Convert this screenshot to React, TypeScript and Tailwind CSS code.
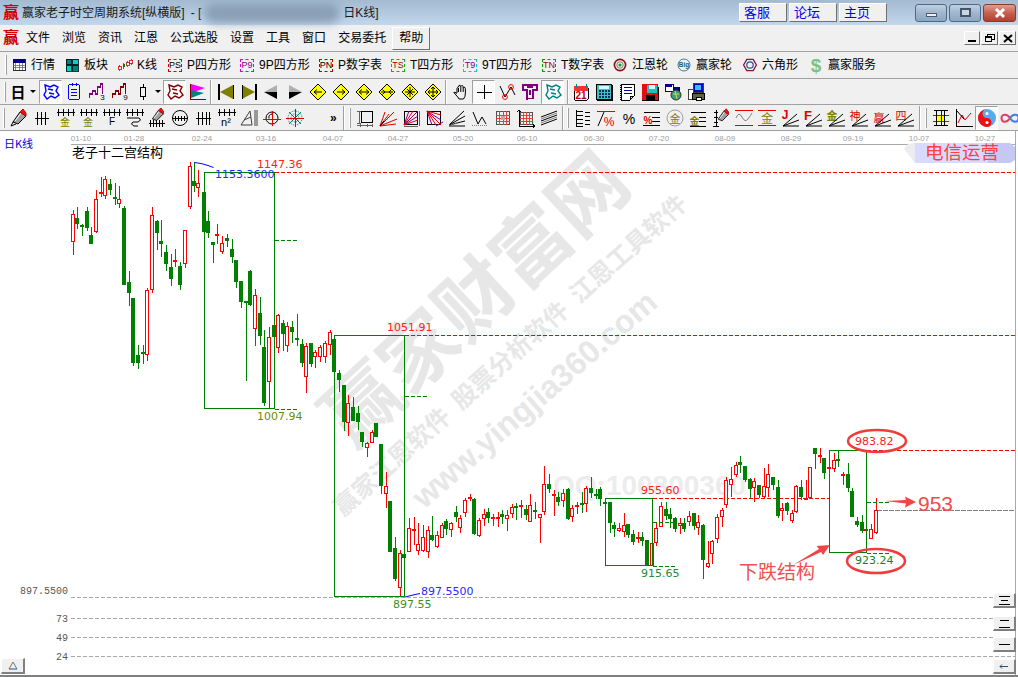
import React from "react";

const F = "'Liberation Sans','Noto Sans CJK SC',sans-serif";
const D = "'DejaVu Sans','Liberation Sans',sans-serif";
const CJK = "'Noto Sans CJK SC','Liberation Sans',sans-serif";

type C = [number, number, number, number, number, string];

const z3: C[] = [
  [219,240,253,337,374,"r"],[233,232,265,281,296,"g"],[247,283,285,288,317,"g"],[261,232,243,293,302,"g"],[275,291,315,341,341,"g"],
  [289,180,208,305,308,"r"],[303,140,186,190,200,"r"],[317,138,148,197,207,"r"],[331,147,163,179,195,"g"],[345,160,202,206,224,"g"],
  [359,168,208,221,233,"r"],[372,228,235,464,464,"g"],[387,423,456,488,527,"g"],[401,504,504,698,707,"g"],[415,645,675,698,716,"g"],
  [429,645,665,668,702,"g"],[443,474,481,674,692,"r"],[456,231,256,479,488,"r"],[471,270,273,308,360,"g"],[485,270,334,342,380,"g"],
  [499,345,366,401,424,"g"],[513,372,411,446,467,"g"],[527,357,391,395,412,"r"],[540,395,408,464,480,"g"],[555,300,301,401,414,"r"],
  [570,97,109,230,236,"r"],[582,97,153,167,187,"g"],[596,120,160,173,201,"r"],[612,185,186,305,305,"g"],[624,243,273,308,323,"g"],
  [640,335,336,344,399,"g"],[653,282,313,316,342,"r"],[666,318,340,365,372,"r"],[681,312,324,332,351,"g"],[696,326,357,381,398,"g"],
  [708,390,390,456,474,"g"],[723,453,453,515,534,"g"],[738,512,514,518,752,"g"],[750,421,423,525,527,"g"],[765,477,496,598,647,"r"],
  [780,501,549,617,645,"g"],[792,600,652,818,828,"g"],[807,590,622,755,834,"r"],[822,560,585,621,650,"g"],[834,553,556,655,670,"r"],
  [849,570,579,611,662,"g"],[863,575,589,647,665,"r"],[876,573,591,605,640,"g"],[891,552,625,629,647,"g"],[906,628,642,698,710,"g"],
  [918,640,649,742,790,"r"],[933,639,640,702,710,"g"],[947,660,667,682,713,"r"],[960,645,652,682,695,"r"],[975,632,640,680,700,"r"],
  [990,600,607,646,675,"r"],
];
const z4: C[] = [
  [12,50,57,155,175,"g"],[27,150,160,180,215,"g"],[42,195,195,305,332,"g"],[54,225,250,310,347,"r"],[69,230,262,302,304,"g"],[84,258,279,305,330,"g"],
  [96,335,335,365,380,"g"],[111,365,370,385,410,"r"],[126,330,337,368,370,"r"],[138,310,310,350,352,"g"],[153,372,372,497,522,"g"],
  [168,455,497,523,563,"r"],[180,543,543,697,697,"g"],[195,650,685,777,783,"g"],[210,690,700,805,830,"r"],[222,690,703,715,765,"g"],
  [237,595,625,695,697,"r"],[252,590,628,631,675,"r"],[264,610,672,692,705,"r"],[279,615,652,692,695,"r"],[294,617,631,695,713,"r"],
  [306,588,645,660,663,"g"],[321,633,646,680,683,"r"],[336,610,616,653,655,"r"],[348,598,604,627,645,"g"],[363,605,609,630,650,"r"],
  [378,558,576,591,606,"g"],[390,585,595,625,640,"r"],[405,535,539,580,590,"r"],[420,521,530,533,542,"r"],[432,535,537,642,645,"g"],
  [447,593,601,648,650,"r"],[462,567,583,596,617,"r"],[474,565,576,593,610,"g"],[489,582,592,598,617,"r"],[504,575,590,593,622,"r"],
  [516,570,583,590,612,"g"],[531,570,584,598,632,"r"],[546,552,562,581,595,"r"],[558,548,558,561,600,"g"],[573,540,556,562,595,"r"],
  [588,555,568,584,600,"g"],[600,523,556,605,607,"r"],[615,545,570,572,598,"g"],[630,583,583,595,670,"r"],[642,438,492,575,585,"r"],
  [657,462,492,506,520,"g"],[672,510,522,525,587,"r"],[684,515,531,545,558,"g"],[699,508,520,542,560,"r"],[714,503,507,597,600,"g"],
  [726,555,565,590,605,"r"],[741,545,555,557,582,"r"],[756,515,549,553,580,"g"],[768,497,505,553,575,"r"],[783,470,505,520,535,"g"],
  [798,508,523,526,537,"g"],[810,502,507,536,557,"g"],[825,535,547,550,555,"g"],[840,547,547,608,640,"g"],[852,605,615,627,650,"g"],
  [867,610,625,633,635,"r"],[882,578,616,635,650,"r"],[894,612,612,645,655,"g"],[909,630,643,666,675,"g"],[924,635,650,653,668,"r"],
  [936,637,651,663,678,"g"],[951,660,660,737,737,"g"],[966,655,670,737,737,"r"],[978,610,625,668,677,"r"],[993,545,557,620,622,"r"],
];
const z5: C[] = [
  [18,245,268,288,300,"g"],[32,265,283,297,325,"g"],[45,290,295,327,335,"g"],[60,295,308,318,342,"r"],[72,295,310,327,335,"g"],
  [87,273,289,305,318,"r"],[102,280,280,318,330,"g"],[114,285,307,325,345,"r"],[129,313,315,420,476,"g"],[144,362,428,442,445,"r"],
  [156,360,362,403,432,"r"],[171,282,292,356,368,"r"],[186,265,270,292,320,"r"],[198,170,181,254,263,"r"],[213,140,178,196,230,"r"],
  [228,125,136,165,170,"r"],[240,108,127,134,160,"g"],[255,138,138,180,187,"g"],[270,175,178,206,235,"g"],[282,175,183,203,245,"r"],
  [297,195,195,225,235,"g"],[312,145,197,230,233,"r"],[324,132,163,203,230,"r"],[339,172,172,195,210,"g"],[354,180,202,287,295,"g"],
  [366,250,265,274,303,"r"],[381,245,250,272,285,"g"],[396,270,278,302,310,"r"],[408,195,199,277,280,"r"],[423,180,202,231,240,"g"],
  [438,180,234,237,240,"r"],[450,140,142,233,237,"r"],[465,85,85,101,148,"g"],[480,85,105,108,130,"r"],[492,113,115,158,178,"g"],
  [507,142,142,145,172,"r"],[522,100,121,146,155,"r"],[534,90,118,122,140,"g"],[549,155,163,165,195,"r"],[564,128,162,203,215,"g"],
  [576,205,213,290,292,"g"],[591,290,303,314,320,"g"],[606,285,305,332,340,"g"],[618,322,328,333,390,"r"],[633,312,328,356,358,"r"],
  [648,235,270,338,342,"r"],
];

function Candle({ c, ox, oy }: { c: C; ox: number; oy: number }) {
  const px = Math.floor(ox + c[0] / 3);
  const wt = Math.round(oy + c[1] / 3);
  const bt = Math.round(oy + c[2] / 3);
  const bb = Math.round(oy + c[3] / 3);
  const wb = Math.round(oy + c[4] / 3);
  const red = c[5] === "r";
  const col = red ? "#ff0000" : "#008000";
  const h = bb - bt;
  return (
    <g>
      <rect x={px} y={wt} width={1} height={wb - wt} fill={col} />
      {h <= 2 || !red ? (
        <rect x={px - 2} y={bt} width={4} height={Math.max(h, 2)} fill={col} />
      ) : (
        <rect x={px - 1.5} y={bt + 0.5} width={3} height={h - 1} fill="#fff" stroke={col} strokeWidth={1} />
      )}
    </g>
  );
}

function Label({ x, y, c, t, a }: { x: number; y: number; c: string; t: string; a?: "end" | "start" | "middle" }) {
  return (
    <text x={x} y={y} fill={c} fontFamily={D} fontSize={11} textAnchor={a ?? "start"}>
      {t}
    </text>
  );
}

const dates: [string, number][] = [
  ["01-10", 81],["01-28", 134],["02-24", 202],["03-16", 266],["04-07", 333],["04-27", 398],["05-20", 463],["06-10", 527],
  ["06-30", 594],["07-20", 659],["08-09", 725],["08-29", 791],["09-19", 853],["10-07", 919],["10-27", 985],
];

function Chart() {
  const G = "#008000";
  return (
    <svg className="absolute inset-0 block" width={1018} height={544} viewBox="0 131 1018 544">
      {/* watermark */}
      <g fill="#e7e7e7" fontFamily={CJK} fontWeight={700}>
        <text x={476} y={326} fontSize={77} textAnchor="middle" transform="rotate(-43 476 300)">赢家财富网</text>
        <text x={510} y={364} fontSize={24.5} textAnchor="middle" transform="rotate(-42 510 355)">
          赢家江恩软件<tspan dx={12}>股票分析软件</tspan><tspan dx={12}>江恩工具软件</tspan>
        </text>
      </g>
      <g fill="#e7e7e7" fontFamily="'Liberation Sans',sans-serif" fontWeight={700}>
        <text x={535} y={410} fontSize={32} textAnchor="middle" transform="rotate(-41 535 400)">www.yingjia360.com</text>
        <text x={553} y={495} fontSize={28} fill="#ececec">QQ:100800360</text>
      </g>

      {/* axes */}
      <rect x={71} y={144} width={945} height={1} fill="#a8a8a8" />
      <rect x={1015} y={131} width={1} height={544} fill="#a8a8a8" />
      {dates.map(([t, x]) => (
        <text key={t} x={x} y={141} fill="#a0a0a0" fontFamily={F} fontSize={8} textAnchor="middle">{t}</text>
      ))}

      <text x={4} y={148} fill="#0000e0" fontFamily={CJK} fontSize={11}>日K线</text>
      <text x={72} y={157} fill="#000" fontFamily={CJK} fontSize={13}>老子十二宫结构</text>

      {/* top-right banner */}
      <path d="M904 149 L908 144 L915 143 V163 H915 L904 149Z" fill="#ececf2" />
      <rect x={915} y={143} width={73} height={20} fill="#d8daff" />
      <path d="M988 143 H1010 L1015 147 V160 L1010 163 H988Z" fill="#c5c8f5" />
      <text x={925} y={159} fill="#ff4040" fontFamily={CJK} fontSize={18.5}>电信运营</text>

      {/* grey dashed */}
      <g stroke="#a8a8a8" strokeDasharray="4 2" shapeRendering="crispEdges">
        <line x1={71} x2={1015} y1={597.5} y2={597.5} />
        <line x1={71} x2={1015} y1={618.5} y2={618.5} />
        <line x1={71} x2={1015} y1={637.5} y2={637.5} />
        <line x1={71} x2={1015} y1={656.5} y2={656.5} />
      </g>
      <line x1={877} x2={1015} y1={510.5} y2={510.5} stroke="#808080" strokeDasharray="5 1" shapeRendering="crispEdges" />

      {/* red dashed */}
      <g stroke="#ff0000" strokeDasharray="4 2" shapeRendering="crispEdges">
        <line x1={275} x2={1015} y1={172.5} y2={172.5} />
        <line x1={405} x2={1015} y1={335.5} y2={335.5} />
        <line x1={653} x2={829} y1={498.5} y2={498.5} />
        <line x1={867} x2={1015} y1={450.5} y2={450.5} />
      </g>

      {/* candles */}
      {z3.map((c, i) => <Candle key={"a" + i} c={c} ox={0} oy={130} />)}
      {z4.map((c, i) => <Candle key={"b" + i} c={c} ox={330} oy={320} />)}
      {z5.map((c, i) => <Candle key={"c" + i} c={c} ox={660} oy={420} />)}

      {/* boxes */}
      <g stroke={G} fill="none" shapeRendering="crispEdges">
        <rect x={204.5} y={172.5} width={70} height={236} />
        <rect x={334.5} y={335.5} width={70} height={261} />
        <rect x={605.5} y={498.5} width={47} height={67} />
        <rect x={829.5} y={450.5} width={37} height={102} />
        <g strokeDasharray="4 2">
          <line x1={275} x2={297} y1={240.5} y2={240.5} />
          <line x1={275} x2={297} y1={409.5} y2={409.5} />
          <line x1={405} x2={427} y1={396.5} y2={396.5} />
          <line x1={653} x2={675} y1={522.5} y2={522.5} />
          <line x1={653} x2={675} y1={566.5} y2={566.5} />
          <line x1={867} x2={889} y1={502.5} y2={502.5} />
          <line x1={867} x2={889} y1={553.5} y2={553.5} />
        </g>
      </g>

      {/* blue leader lines */}
      <path d="M194.5 162.5 L201 163.5 L208 165.5 L213.5 167.5" stroke="#0000ff" fill="none" />
      <path d="M405 597 L413 595 L420 593.5" stroke="#0000ff" fill="none" />

      {/* price labels */}
      <Label x={257} y={168} c="#ff2020" t="1147.36" />
      <Label x={215} y={178} c="#2828ff" t="1153.3600" />
      <Label x={257} y={420} c="#6f8b00" t="1007.94" />
      <Label x={387} y={331} c="#ff2020" t="1051.91" />
      <Label x={421} y={595} c="#2828ff" t="897.5500" />
      <Label x={393} y={608} c="#3d8f1a" t="897.55" />
      <Label x={641} y={494} c="#ff2020" t="955.60" />
      <Label x={641} y={577} c="#268a3c" t="915.65" />
      <Label x={855} y={445} c="#ff2020" t="983.82" />
      <Label x={855} y={564} c="#1a8030" t="923.24" />

      {/* axis numbers */}
      <g fill="#555" fontFamily="'Liberation Mono',monospace" fontSize={10} textAnchor="end">
        <text x={68} y={594}>897.5500</text>
        <text x={68} y={622}>73</text>
        <text x={68} y={641}>49</text>
        <text x={68} y={660}>24</text>
      </g>

      {/* annotations */}
      <g fill="none" stroke="#f23c3c" strokeWidth={2.5}>
        <ellipse cx={877} cy={441} rx={29} ry={11} />
        <ellipse cx={876} cy={561} rx={29} ry={12} />
      </g>
      <path d="M885 501 L906 500 L905 496.5 L916 502 L905 507.5 L906 503.5Z" fill="#f04545" />
      <text x={918} y={511} fill="#f24a4a" fontFamily="'Liberation Sans',sans-serif" fontSize={21}>953</text>
      <path d="M793 565 L819 549 L816.5 546 L830 545 L823 555 L821 552Z" fill="#f04545" />
      <text x={739} y={579} fill="#f25050" fontFamily={CJK} fontSize={19}>下跌结构</text>
    </svg>
  );
}

/* ---------- Icons ---------- */
const I = ({ children }: { children: React.ReactNode }) => (
  <svg width={20} height={20} viewBox="0 0 20 20" fill="none" stroke="#000" shapeRendering="crispEdges" className="block">
    {children}
  </svg>
);
const Tx = ({ x, y, s, c, t, w }: { x: number; y: number; s: number; c: string; t: string; w?: number }) => (
  <text x={x} y={y} fontSize={s} fill={c} stroke="none" fontFamily={F} fontWeight={w ?? 400} textAnchor="middle" shapeRendering="auto">{t}</text>
);
const Comb = ({ n, y = 4, x0 = 2, dx = 5 }: { n: number; y?: number; x0?: number; dx?: number }) => (
  <g>
    <path d={`M${x0 - 1} ${y + 0.5}H${x0 + (n - 1) * dx + 3}`} />
    {Array.from({ length: n }).map((_, i) => (
      <path key={i} d={`M${x0 + i * dx + 0.5} ${y - 3}V${y + 4}`} />
    ))}
  </g>
);
const Ang = () => <path d="M3 18H19M3 18L19 12M3 18L17 6" shapeRendering="auto" />;
const Dia = ({ children }: { children: React.ReactNode }) => (
  <I>
    <path d="M10 2L18 10L10 18L2 10Z" fill="#ffff00" stroke="#000" shapeRendering="auto" />
    {children}
  </I>
);
const Stairs = ({ c, t }: { c: string; t: string }) => (
  <I>
    <path d="M2.5 16V12H5.5V9H8.5V12H10.5V5H13.5V2H15.5V12" stroke={c} strokeWidth={1.4} />
    <Tx x={15.5} y={18} s={8} c="#000" t={t} />
  </I>
);
const Wob = ({ c }: { c: string }) => (
  <I>
    <path d="M4 3L9 5L13 3L17 5L15 9L18 13L14 16L10 14L6 17L3 13L5 9ZM7 7L12 8M8 11L13 12" stroke={c} strokeWidth={1.4} shapeRendering="auto" />
  </I>
);

const row2a: React.ReactNode[] = [
  <Wob c="#0000ff" />,
  <I><rect x={4.5} y={2.5} width={11} height={15} rx={2} stroke="#0000ff" /><path d="M7 7H13M7 10H13M7 13H13M8 1V4M12 1V4" stroke="#0000ff" /></I>,
  <Stairs c="#800080" t="3" />,
  <Stairs c="#800000" t="9" />,
  <I><rect x={7.5} y={5.5} width={5} height={9} /><path d="M10.5 2V5M10.5 15V18" /></I>,
];
const row2b: React.ReactNode[] = [
  <Wob c="#800000" />,
  <I>
    <path d="M3 2V11L17 6Z" fill="#ff00ff" stroke="none" shapeRendering="auto" />
    <path d="M3 8V16L16 11Z" fill="#008080" stroke="none" shapeRendering="auto" />
    <path d="M2 2V17H18" stroke="#800000" />
  </I>,
];
const Tri = ({ d, f1, f2 }: { d: string; f1: string; f2?: string }) => (
  <path d={d} fill={f1} stroke={f2 ?? "none"} shapeRendering="auto" />
);
const row2c: React.ReactNode[] = [
  <I><rect x={2} y={2} width={2} height={16} fill="#000" stroke="none" /><Tri d="M4 10L17 3V17Z" f1="#808000" /><path d="M17 3V17" /></I>,
  <I><rect x={16} y={2} width={2} height={16} fill="#000" stroke="none" /><Tri d="M16 10L3 3V17Z" f1="#808000" /><path d="M3 3V17" /></I>,
  <I><Tri d="M2 10L15 3V10Z" f1="#b0b0b0" /><Tri d="M2 10L15 17V10Z" f1="#000" /></I>,
  <I><Tri d="M17 10L4 3V10Z" f1="#b0b0b0" /><Tri d="M17 10L4 17V10Z" f1="#000" /></I>,
  <Dia><path d="M6 10H14M6 10L9 7.5M6 10L9 12.5" shapeRendering="auto" /></Dia>,
  <Dia><path d="M6 10H14M14 10L11 7.5M14 10L11 12.5" shapeRendering="auto" /></Dia>,
  <Dia><path d="M5 10H15M5 10L8 7.5M5 10L8 12.5M15 10L12 7.5M15 10L12 12.5" shapeRendering="auto" /></Dia>,
  <Dia><path d="M4 10H16M8 10L5.5 7.5M8 10L5.5 12.5M12 10L14.5 7.5M12 10L14.5 12.5" shapeRendering="auto" /></Dia>,
  <Dia><path d="M10 5V15M5 10H15M7 7L13 13M13 7L7 13" shapeRendering="auto" /></Dia>,
  <Dia><path d="M10 5V15M5 10H15M10 5L8 7M10 5L12 7M10 15L8 13M10 15L12 13M5 10L7 8M5 10L7 12M15 10L13 8M15 10L13 12" shapeRendering="auto" /></Dia>,
];
const row2d: React.ReactNode[] = [
  <I><path d="M6 11V6M6 6Q6.7 4.5 7.5 6V10M7.5 5Q7.5 3 9 3.2Q9.8 3.5 9.8 5V10M9.8 4.5Q10.5 3 11.7 3.7Q12.2 4.2 12.2 6V10M12.2 6Q13 4.6 14 5.5Q14.4 6 14.4 8V11Q14.4 15 12.5 17H8Q7 15 5 13L2.8 10.5Q3.6 9.5 6 11.5" shapeRendering="auto" /></I>,
  <I><path d="M10.5 3V17M3 10.5H18" /></I>,
  <I>
    <path d="M3 4L8 15L14 5L18 13" shapeRendering="auto" />
    <circle cx={14} cy={5} r={2.4} stroke="#ff0000" shapeRendering="auto" />
    <circle cx={8} cy={15} r={2.4} stroke="#ff0000" shapeRendering="auto" />
  </I>,
  <I><path d="M3 3H17V8H13V16L7 17V8H3ZM7 5H13M10 8V13" stroke="#800080" strokeWidth={1.4} /></I>,
  <Wob c="#008080" />,
];
const row2e: React.ReactNode[] = [
  <I>
    <rect x={3} y={5} width={14} height={13} rx={1} fill="#fff" stroke="#000" />
    <rect x={3} y={4} width={14} height={5} fill="#ff3030" stroke="none" />
    <path d="M5 2V5M15 2V5" stroke="#008080" />
    <Tx x={10} y={17} s={10} c="#c00000" t="21" w={700} />
  </I>,
  <I>
    <rect x={2.5} y={2.5} width={15} height={15} fill="#40c0c0" stroke="#000" />
    <rect x={5} y={4} width={10} height={3} fill="#c8ffff" stroke="none" />
    <g fill="#003060" stroke="none">
      {[5, 8, 11, 14].flatMap((x) => [8, 11, 14].map((y) => <rect key={x + "" + y} x={x} y={y} width={2} height={2} />))}
    </g>
    <path d="M18.5 3V18.5H3" />
  </I>,
  <I>
    <path d="M4 2.5H17V14L13 18H4Z" fill="#fff" />
    <path d="M4 3V18" strokeWidth={2} strokeDasharray="1 1" />
    <path d="M7 5H15M7 8H15M7 11H15" stroke="#0000a0" />
    <path d="M13 18V14H17" />
  </I>,
  <I>
    <rect x={2} y={2} width={16} height={16} fill="#e01010" stroke="none" />
    <rect x={7} y={3} width={10} height={8} fill="#20c0c0" stroke="none" />
    <rect x={9} y={3} width={6} height={4} fill="#d0ffff" stroke="none" />
    <rect x={6} y={13} width={9} height={5} fill="#000" stroke="none" />
    <path d="M2 18.5H18.5V5" />
  </I>,
  <I>
    <rect x={2} y={2} width={8} height={7} fill="#fff" stroke="#000080" />
    <rect x={3} y={3} width={6} height={2} fill="#0000a0" stroke="none" />
    <rect x={10} y={5} width={7} height={5} fill="#000080" stroke="none" />
    <circle cx={13} cy={13} r={5} fill="#30a080" stroke="#303030" shapeRendering="auto" />
    <path d="M10 12H16M12 9L14 17" stroke="#f0d040" shapeRendering="auto" />
  </I>,
  <I>
    <rect x={7} y={1.5} width={10} height={9} fill="#0000c0" stroke="#404040" />
    <rect x={9} y={3} width={6} height={5} fill="#30c0ff" stroke="none" />
    <rect x={2} y={7} width={5} height={10} fill="#fff" stroke="#404040" />
    <rect x={6} y={11} width={12} height={6} fill="#606040" stroke="#000" />
    <rect x={10} y={15} width={5} height={3} fill="#fff" stroke="#000" />
  </I>,
];

const Pen = ({ body }: { body?: boolean }) => (
  <g shapeRendering="auto">
    <path d="M4 14L11 4L17 8L9 16Z" fill="#a0a0a0" stroke="#000" />
    <path d="M6 13L12 5" stroke="#fff" />
    <path d="M11 4L14 1L17 5L17 8Z" fill="#f01010" stroke="#c00000" />
    {body ? null : <path d="M4 14L2 18L7 16" stroke="#000" />}
  </g>
);

const row3a: React.ReactNode[] = [
  <I><Pen /></I>,
  <I><path d="M3 10.5H17M5.5 4V17M9.5 4V17M13.5 4V17" /></I>,
  <I><Comb n={4} x0={3} /><Tx x={10} y={18} s={10} c="#808000" t="金" /></I>,
  <I><Comb n={4} x0={3} /><Tx x={10} y={18} s={10} c="#808000" t="金" /></I>,
  <I><Comb n={4} x0={3} /><Tx x={11} y={17} s={10} c="#000" t="F" /></I>,
  <I><Comb n={4} x0={3} /><path d="M3 10H15Q18 12 14 14H9Q6 16 10 18H14" shapeRendering="auto" /></I>,
  <I><g transform="translate(2 -1) scale(.85)"><Pen body /></g><Comb n={5} y={15} x0={3} dx={3} /></I>,
  <I><circle cx={10} cy={10} r={7.5} shapeRendering="auto" /><path d="M2 10.5H18M5.5 8V13M8.5 8V13M11.5 8V13M14.5 8V13" /></I>,
  <I><path d="M3 10.5H18M5.5 4V17M9.5 4V17M13.5 4V17M16.5 4V17" /></I>,
  <I><Comb n={4} x0={3} /><Tx x={10} y={18} s={11} c="#000" t="n²" /></I>,
  <I><path d="M2 17L11 3L13 17ZM5 12L12 9M16 2V18M18 2V18" stroke="#404040" shapeRendering="auto" /></I>,
  <I>
    <circle cx={10} cy={10} r={6} shapeRendering="auto" />
    <path d="M1 11.5H19M10.5 3V18" stroke="#e00000" />
    <path d="M10 6Q6 7 7 10.5" shapeRendering="auto" />
  </I>,
  <I>
    <g stroke="#008080" shapeRendering="auto">
      <circle cx={10} cy={10} r={7} strokeDasharray="1 1" />
      <circle cx={10} cy={10} r={4} strokeDasharray="1 1" />
      <path d="M4 4L16 16M16 4L4 16" />
    </g>
    <path d="M1 10.5H19M10.5 1V19" stroke="#e00000" />
  </I>,
];
const row3b: React.ReactNode[] = [
  <I>
    <rect x={6.5} y={3.5} width={11} height={11} />
    <path d="M2 3H6M2 15H6M4 3V15M2 17.5H18M5 16V19M12 16V19M17 16V19" stroke="#606060" />
  </I>,
  <I><path d="M2 18L7 4M2 18L11 6M2 18L16 4M2 18L19 11M2 18L18 16" stroke="#e00000" shapeRendering="auto" /><path d="M2 18L6 13" shapeRendering="auto" /></I>,
  <I>
    <rect x={3.5} y={3.5} width={13} height={13} />
    <path d="M3 17L8 3M3 17L17 3M3 17L17 8" stroke="#800080" shapeRendering="auto" />
    <path d="M3 17L12 3M3 17L17 12" stroke="#e00000" shapeRendering="auto" />
    <path d="M3 18H17M18 3V18" stroke="#606060" />
  </I>,
  <I>
    <rect x={3.5} y={3.5} width={13} height={13} />
    <path d="M3 3L8 17M3 3L17 12" stroke="#800080" shapeRendering="auto" />
    <path d="M3 3L12 17M3 3L17 17M3 3L17 7" stroke="#e00000" shapeRendering="auto" />
    <path d="M12 18L19 14" stroke="#800080" shapeRendering="auto" />
  </I>,
  <I><path d="M2 17L17 3M2 17L18 8M2 17L18 13M2 18H18" shapeRendering="auto" /><path d="M2 17L12 15" stroke="#808080" strokeDasharray="1 1" shapeRendering="auto" /></I>,
  <I><path d="M3 4L8 16L12 9L16 16" shapeRendering="auto" /><path d="M2 17.5H18" stroke="#808080" strokeDasharray="1 1" /></I>,
  <I>
    <rect x={3.5} y={3.5} width={13} height={13} stroke="#505050" />
    <path d="M6.5 3V17M10 3V17M13.5 3V17M3 7H17M3 10H17M3 13.5H17" stroke="#e04040" />
    <path d="M8 8H12V12H8Z" fill="#d0a0a0" stroke="none" />
  </I>,
  <I>
    <rect x={4.5} y={4.5} width={12} height={12} stroke="#505050" />
    <path d="M7.5 4V17M10.5 4V17M13.5 4V17M4 7.5H17M4 10.5H17M4 13.5H17" stroke="#e04040" />
    <path d="M3 2V18H19M1.5 4L3 2L4.5 4M17 16.5L19 18L17 19.5" />
  </I>,
  <I><path d="M2 9L18 3M2 13L18 7M2 17L18 11" shapeRendering="auto" /><path d="M2 11L18 5M2 15L18 9" stroke="#808080" shapeRendering="auto" /></I>,
];
const row3c: React.ReactNode[] = [
  <I><path d="M3.5 2V18M3 3H10M3 7H10M3 11H10M3 15H10M3 18H10M12 4H17M12 8H17M12 12H17M12 16H17" /></I>,
  <I><path d="M1 3H19" stroke="#e00000" /><path d="M2 18L8 4" shapeRendering="auto" /><Tx x={13} y={18} s={12} c="#e00000" t="%" /></I>,
  <I><Tx x={10} y={16} s={14} c="#000" t="%" /></I>,
  <I><path d="M2 4H18M10 9H18M10 13H18" /><path d="M1 17.5H18" /><Tx x={6} y={16} s={10} c="#e00000" t="%" w={700} /></I>,
  <I><circle cx={10} cy={10} r={8} stroke="#a0a0a0" shapeRendering="auto" /><Tx x={10} y={15} s={11} c="#808000" t="金" /></I>,
  <I><path d="M3 4H18M11 9H18M11 13H18M2 18H18" /><Tx x={6.5} y={17} s={10} c="#808000" t="金" w={700} /></I>,
  <I>
    <path d="M3 4H7M3 9H7M3 14H7M2 18H8M5 2V18" />
    <g transform="translate(4 0) scale(.8)"><Pen body /></g>
  </I>,
  <I>
    <path d="M1 2.5H19M1 17.5H19" stroke="#e00000" />
    <path d="M2 10Q5 3 8 9T14 11T18 5" stroke="#808080" shapeRendering="auto" />
  </I>,
  <I><path d="M1 2.5H19M1 17.5H19" stroke="#e00000" /><Tx x={10} y={15} s={12} c="#808000" t="金" /></I>,
  <I><Tx x={5} y={11} s={12} c="#e00000" t="J" w={700} /><Ang /></I>,
  <I><Tx x={5} y={12} s={13} c="#e00000" t="F" w={700} /><Ang /></I>,
  <I><Tx x={6} y={12} s={11} c="#808000" t="金" w={700} /><Ang /></I>,
  <I><Tx x={6} y={12} s={11} c="#e00000" t="神" /><Ang /></I>,
  <I><Tx x={7} y={14} s={11} c="#e00000" t="赢" /><Ang /></I>,
  <I><Tx x={6} y={12} s={11} c="#e00000" t="四" /><Ang /></I>,
];
const row3d: React.ReactNode[] = [
  <I>
    <path d="M2 7.5H18M2 13.5H18" stroke="#e00000" />
    <rect x={7} y={8} width={6} height={5} fill="#ffff00" stroke="none" />
    <path d="M5.5 2V18M13.5 2V18" stroke="#000" />
    <path d="M10.5 2V18" stroke="#0000ff" />
    <path d="M3 2.5H17M3 17.5H17" />
  </I>,
  <I>
    <path d="M2 1V18H19" />
    <path d="M4 15L8 7L11 12L17 5" stroke="#e00000" shapeRendering="auto" />
    <path d="M3 3L10 11" shapeRendering="auto" />
  </I>,
  <I>
    <circle cx={10} cy={10} r={9} fill="#5aa8f0" stroke="none" shapeRendering="auto" />
    <path d="M10 1A9 9 0 0 0 10 19A4.5 4.5 0 0 0 10 10A4.5 4.5 0 0 1 10 1Z" fill="#f01010" stroke="none" shapeRendering="auto" />
    <circle cx={10} cy={5.5} r={1.5} fill="#fff" stroke="none" shapeRendering="auto" />
    <circle cx={10} cy={14.5} r={1.5} fill="#fff" stroke="none" shapeRendering="auto" />
  </I>,
  <I>
    <path d="M10 10C7 5 1 6 1.5 10.5S7 15 10 10" stroke="#e04060" strokeWidth={2} shapeRendering="auto" />
    <path d="M10 10C13 5 19 6 18.5 10.5S13 15 10 10" stroke="#4080e0" strokeWidth={2} shapeRendering="auto" />
  </I>,
];

const row1: { cls: string; t: string; ic: React.ReactNode }[] = [
  { cls: "w-[53px]", t: "行情", ic: <I><rect x={2.5} y={3.5} width={15} height={13} fill="#fff" /><rect x={2} y={3} width={16} height={4} fill="#000080" stroke="none" /><path d="M3 10H17M3 13H17M6 7V16M10 7V16M14 7V16" stroke="#6060a0" /></I> },
  { cls: "w-[53px]", t: "板块", ic: <I><rect x={2.5} y={2.5} width={7} height={7} fill="#008080" /><rect x={10.5} y={2.5} width={7} height={7} fill="#00d0d0" /><rect x={2.5} y={10.5} width={7} height={7} fill="#00d0d0" /><rect x={10.5} y={10.5} width={7} height={7} fill="#008080" /></I> },
  { cls: "w-[50px]", t: "K线", ic: <I><path d="M3.5 10V18M8.5 7V15M13.5 5V13M17.5 2V10" stroke="#e00000" /><rect x={2} y={12} width={3} height={4} fill="#fff" stroke="#e00000" /><rect x={7} y={9} width={3} height={4} fill="#008000" stroke="none" /><rect x={12} y={7} width={3} height={4} fill="#fff" stroke="#e00000" /><rect x={16} y={4} width={3} height={4} fill="#fff" stroke="#e00000" /></I> },
];
function Boxed({ t, b, c }: { t: string; b: string; c: string }) {
  return (
    <span className={`flex h-[13px] w-[14px] items-center justify-center border border-dashed ${b} text-[9px] leading-none ${c}`}>{t}</span>
  );
}
const row1b: { cls: string; t: string; ic: React.ReactNode }[] = [
  { cls: "w-[72px]", t: "P四方形", ic: <Boxed t="PS" b="border-[#e00000]" c="text-black" /> },
  { cls: "w-[79px]", t: "9P四方形", ic: <Boxed t="P9" b="border-[#e000e0]" c="text-[#800080]" /> },
  { cls: "w-[72px]", t: "P数字表", ic: <Boxed t="PN" b="border-[#c00000]" c="text-black" /> },
  { cls: "w-[72px]", t: "T四方形", ic: <Boxed t="TS" b="border-[#00c000]" c="text-[#a00000]" /> },
  { cls: "w-[79px]", t: "9T四方形", ic: <Boxed t="T9" b="border-[#00d0d0]" c="text-[#800080]" /> },
  { cls: "w-[71px]", t: "T数字表", ic: <Boxed t="TN" b="border-[#00a000]" c="text-[#a00000]" /> },
];
const row1c: { cls: string; t: string; ic: React.ReactNode }[] = [
  { cls: "w-[64px]", t: "江恩轮", ic: <I><circle cx={10} cy={10} r={7} stroke="#801020" strokeWidth={2} shapeRendering="auto" /><circle cx={10} cy={10} r={4} stroke="#806020" shapeRendering="auto" /><circle cx={10} cy={10} r={2} fill="#00a050" stroke="none" shapeRendering="auto" /></I> },
  { cls: "w-[66px]", t: "赢家轮", ic: <I><circle cx={10} cy={10} r={7.5} stroke="#206070" shapeRendering="auto" fill="#e8f4f4" /><Tx x={10} y={13} s={8} c="#206070" t="Big" w={700} /></I> },
  { cls: "w-[66px]", t: "六角形", ic: <I><path d="M6 3H14L18 10L14 17H6L2 10Z" stroke="#901030" strokeWidth={1.6} shapeRendering="auto" /><circle cx={10} cy={10} r={4} stroke="#2050a0" strokeWidth={1.5} shapeRendering="auto" /></I> },
  { cls: "w-[70px]", t: "赢家服务", ic: <span className="flex w-[16px] justify-center text-[19px] leading-none font-bold text-[#80c080]">$</span> },
];

const Grip = () => <span className="mx-[2px] h-[20px] w-[2px] border-x border-l-white border-r-[#a0a0a0] bg-[#d0d0d0]" />;
const Sep = ({ cls }: { cls: string }) => <span className={`h-[24px] w-[2px] border-x border-l-[#a0a0a0] border-r-white ${cls}`} />;
const Btn = ({ children, on }: { children: React.ReactNode; on?: boolean }) => (
  <span className={`flex h-[24px] w-[23px] shrink-0 items-center justify-center ${on ? "border border-t-[#a0a0a0] border-l-[#a0a0a0] border-r-white border-b-white bg-[#fafafa]" : ""}`}>
    {children}
  </span>
);
const Drop = ({ cls }: { cls: string }) => (
  <span className={`h-0 w-0 border-x-[3px] border-t-[3px] border-x-transparent border-t-black ${cls}`} />
);
const Row = ({ children }: { children: React.ReactNode }) => <div className="flex items-center border-b border-[#a0a0a0]">{children}</div>;

const raised = "border border-t-white border-l-white border-r-[#707070] border-b-[#707070] bg-[#f0f0f0]";
const raised2 = "border-t border-l border-r-2 border-b-2 border-t-white border-l-white border-r-[#808080] border-b-[#808080] bg-[#f0f0f0]";

function Item({ x }: { x: { cls: string; t: string; ic: React.ReactNode } }) {
  return (
    <span className={`flex shrink-0 items-center gap-[4px] ${x.cls}`}>
      <span className="flex w-[16px] shrink-0 items-center justify-center">{x.ic}</span>
      <span className="whitespace-nowrap">{x.t}</span>
    </span>
  );
}

const WinBtn = ({ cls, children }: { cls: string; children: React.ReactNode }) => (
  <span className={`flex h-[18px] items-center justify-center rounded-[3px] border ${cls}`}>{children}</span>
);

export default function App() {
  const font = { fontFamily: F };
  return (
    <div className="flex h-[677px] w-[1018px] flex-col overflow-hidden bg-[#f0f0f0] text-[12px] text-black" style={font}>
      {/* title */}
      <div className="flex h-[25px] shrink-0 items-center bg-linear-to-b from-[#a3bad1] to-[#c2d7ec] pr-[2px] pl-[3px] text-[#1a1a1a]">
        <span className="w-[19px] text-[16px] leading-none font-bold text-[#d00000]">赢</span>
        <span className="whitespace-nowrap">赢家老子时空周期系统[纵横版]</span>
        <span className="ml-[6px] whitespace-nowrap">- [</span>
        <span className="ml-[3px] h-[20px] w-[136px] rounded-full bg-[#8aa0b6] blur-[4px]" />
        <span className="ml-[3px] whitespace-nowrap">日K线]</span>
        <span className="ml-auto flex gap-[2px] text-[13px] text-[#0000f0]">
          {["客服", "论坛", "主页"].map((t) => (
            <span key={t} className={`flex h-[19px] w-[48px] items-center pl-[4px] ${raised}`}>{t}</span>
          ))}
        </span>
        <span className="ml-[28px] flex gap-[2px]">
          <WinBtn cls="w-[32px] border-[#53697f] bg-linear-to-b from-[#bdd0e3] via-[#a0b6cd] to-[#8ba7c4]">
            <span className="mt-[4px] h-[4px] w-[11px] border border-[#4a5a6a] bg-[#f0f0f0]" />
          </WinBtn>
          <WinBtn cls="w-[32px] border-[#53697f] bg-linear-to-b from-[#bdd0e3] via-[#a0b6cd] to-[#8ba7c4]">
            <span className="h-[9px] w-[11px] border-2 border-[#44546a] bg-[#c8d6e4]" />
          </WinBtn>
          <WinBtn cls="w-[33px] border-[#8a3b30] bg-linear-to-b from-[#e09d90] via-[#c7604f] to-[#b04030]">
            <svg width={14} height={12} viewBox="0 0 14 12"><path d="M3 2L11 10M11 2L3 10" stroke="#fff" strokeWidth={3} /></svg>
          </WinBtn>
        </span>
      </div>

      {/* menu */}
      <div className="flex h-[27px] shrink-0 items-center border-b border-[#a0a0a0] pr-[2px] pl-[3px]">
        <span className="w-[17px] text-[16px] leading-none font-bold text-[#d00000]">赢</span>
        {["文件", "浏览", "资讯", "江恩", "公式选股", "设置", "工具", "窗口", "交易委托"].map((t) => (
          <span key={t} className="px-[6px] whitespace-nowrap">{t}</span>
        ))}
        <span className={`flex h-[23px] items-center px-[6px] ${raised}`}>帮助</span>
        <span className="ml-auto flex gap-[1px]">
          <span className={`flex h-[14px] w-[16px] items-end justify-center pb-[2px] ${raised}`}><span className="h-[2px] w-[8px] bg-black" /></span>
          <span className={`flex h-[14px] w-[17px] items-center justify-center ${raised}`}>
            <svg width={11} height={10} viewBox="0 0 11 10" fill="none" stroke="#000" shapeRendering="crispEdges"><path d="M3.5 3V1.5H10V6H7.5" /><rect x={1} y={3.5} width={6} height={5} /><path d="M1 4H7" /></svg>
          </span>
          <span className={`flex h-[14px] w-[17px] items-center justify-center ${raised}`}>
            <svg width={10} height={9} viewBox="0 0 10 9"><path d="M1 1L9 8M9 1L1 8" stroke="#000" strokeWidth={2} /></svg>
          </span>
        </span>
      </div>

      {/* toolbar 1 */}
      <Row>
        <div className="flex h-[26px] items-center pl-[3px]">
          <Grip />
          <span className="w-[2px]" />
          {row1.map((x) => <Item key={x.t} x={x} />)}
          {row1b.map((x) => <Item key={x.t} x={x} />)}
          {row1c.map((x) => <Item key={x.t} x={x} />)}
        </div>
      </Row>

      {/* toolbar 2 */}
      <Row>
        <div className="flex h-[25px] items-center pl-[2px]">
          <Grip />
          <span className="flex w-[20px] shrink-0 justify-center text-[15px] leading-none font-bold" style={{ fontFamily: CJK }}>日</span>
          <Drop cls="ml-[2px] mr-[3px]" />
          <Btn on>{row2a[0]}</Btn>
          {row2a.slice(1).map((n, i) => <Btn key={i}>{n}</Btn>)}
          <Drop cls="ml-[1px] mr-[2px]" />
          <Btn on>{row2b[0]}</Btn>
          <Btn>{row2b[1]}</Btn>
          <Sep cls="mx-[1px]" />
          <span className="w-[1px]" />
          {row2c.map((n, i) => <Btn key={i}>{n}</Btn>)}
          <Sep cls="mx-[1px]" />
          <span className="w-[1px]" />
          <Btn>{row2d[0]}</Btn>
          <Btn on>{row2d[1]}</Btn>
          <Btn>{row2d[2]}</Btn>
          <Btn>{row2d[3]}</Btn>
          <Btn on>{row2d[4]}</Btn>
          <Sep cls="ml-[3px]" />
          {row2e.map((n, i) => <Btn key={i}>{n}</Btn>)}
        </div>
      </Row>

      {/* toolbar 3 */}
      <Row>
        <div className="flex h-[25px] items-center pl-[1px]">
          <Grip />
          {row3a.map((n, i) => <Btn key={i}>{n}</Btn>)}
          <span className="ml-[24px] w-[13px] text-[12px] leading-none font-bold">»</span>
          <Sep cls="ml-0" />
          <span className="w-[2px]" />
          <Grip />
          {row3b.map((n, i) => <Btn key={i}>{n}</Btn>)}
          <Sep cls="ml-[2px]" />
          <span className="w-[1px]" />
          <Grip />
          {row3c.map((n, i) => <Btn key={i}>{n}</Btn>)}
          <Sep cls="ml-[3px]" />
          <span className="w-[2px]" />
          <Grip />
          <Btn>{row3d[0]}</Btn>
          <Btn>{row3d[1]}</Btn>
          <Btn on>{row3d[2]}</Btn>
          <Btn>{row3d[3]}</Btn>
        </div>
      </Row>

      {/* chart */}
      <div className="relative flex-1 bg-white">
        <Chart />
        <div className="absolute top-[462px] right-[2px] flex flex-col">
          <span className={`flex h-[15px] w-[23px] items-center justify-center ${raised2}`}>
            <svg width={13} height={11} stroke="#000" shapeRendering="crispEdges"><path d="M1 1.5H12M3 5.5H10M1 9.5H12" /></svg>
          </span>
          <span className={`mt-[8px] flex h-[15px] w-[23px] items-center justify-center ${raised2}`}>
            <svg width={13} height={11} stroke="#000" shapeRendering="crispEdges"><path d="M2 2.5H11M1 9.5H12" /></svg>
          </span>
          <span className={`mt-[6px] flex h-[15px] w-[23px] items-center justify-center ${raised2}`}>
            <svg width={13} height={3} stroke="#000" shapeRendering="crispEdges"><path d="M1 1.5H12" /></svg>
          </span>
          <span className={`mt-[7px] flex h-[15px] w-[23px] items-center justify-center ${raised2}`}>
            <svg width={10} height={7} stroke="#305070" fill="none"><path d="M1 3.5H9M3 1.5L1 3.5L3 5.5" /></svg>
          </span>
        </div>
        <span className={`absolute bottom-[1px] left-[1px] flex h-[16px] w-[24px] items-center justify-center ${raised2}`}>
          <svg width={10} height={9} fill="none"><path d="M5 1L1 8" stroke="#c06030" /><path d="M5 1L9 8" stroke="#3090a0" /><path d="M1 8H9" stroke="#305090" /></svg>
        </span>
      </div>
      <div className="h-[2px] shrink-0 bg-[#808080]" />
    </div>
  );
}
